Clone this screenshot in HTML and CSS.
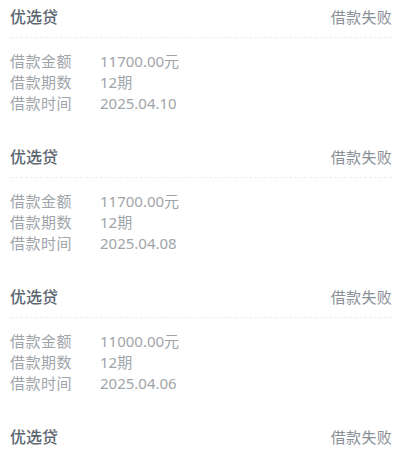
FILE: index.html
```html
<!DOCTYPE html>
<html lang="zh-CN">
<head>
    <meta charset="UTF-8">
    <meta name="viewport" content="width=device-width, initial-scale=1.0">
    <title>借款记录</title>
    <link rel="stylesheet" href="styles.css">
</head>
<body>
    <div class="list">
        <div class="card">
            <div class="card-head">
                <span class="product">优选贷</span>
                <span class="status">借款失败</span>
            </div>
            <div class="card-body">
                <div class="row"><span class="label">借款金额</span><span class="value">11700.00元</span></div>
                <div class="row"><span class="label">借款期数</span><span class="value">12期</span></div>
                <div class="row"><span class="label">借款时间</span><span class="value">2025.04.10</span></div>
            </div>
        </div>

        <div class="card">
            <div class="card-head">
                <span class="product">优选贷</span>
                <span class="status">借款失败</span>
            </div>
            <div class="card-body">
                <div class="row"><span class="label">借款金额</span><span class="value">11700.00元</span></div>
                <div class="row"><span class="label">借款期数</span><span class="value">12期</span></div>
                <div class="row"><span class="label">借款时间</span><span class="value">2025.04.08</span></div>
            </div>
        </div>

        <div class="card">
            <div class="card-head">
                <span class="product">优选贷</span>
                <span class="status">借款失败</span>
            </div>
            <div class="card-body">
                <div class="row"><span class="label">借款金额</span><span class="value">11000.00元</span></div>
                <div class="row"><span class="label">借款期数</span><span class="value">12期</span></div>
                <div class="row"><span class="label">借款时间</span><span class="value">2025.04.06</span></div>
            </div>
        </div>

        <!-- only the header of the next record is on screen -->
        <div class="card card-last">
            <div class="card-head">
                <span class="product">优选贷</span>
                <span class="status">借款失败</span>
            </div>
        </div>
    </div>
</body>
</html>
```

FILE: styles.css
```css
* {
    margin: 0;
    padding: 0;
    box-sizing: border-box;
}
body {
    font-family: 'Noto Sans', 'Noto Sans CJK SC', sans-serif;
    background: #fff;
    height: 450px;
    overflow: hidden;
}
.card {
    padding: 0 8px 27px 10px;
}
.card-last {
    padding-bottom: 0;
}
.card-head {
    display: flex;
    justify-content: space-between;
    align-items: center;
    height: 38px;
    padding-bottom: 4px;
    border-bottom: 1px dashed #eceef0;
}
.card-last .card-head {
    height: 34px;
    padding-bottom: 0;
    border-bottom: none;
}
.product {
    font-size: 16px;
    line-height: 20px;
    font-weight: 500;
    color: #5d6771;
}
.status {
    font-size: 15px;
    line-height: 20px;
    letter-spacing: 0.3px;
    color: #8a9097;
}
.card-body {
    padding-top: 12px;
}
.row {
    display: flex;
    height: 21px;
    align-items: center;
    font-size: 15px;
    line-height: 20px;
    color: #a0a5aa;
}
.label {
    width: 90px;
    letter-spacing: 0.5px;
}
```
